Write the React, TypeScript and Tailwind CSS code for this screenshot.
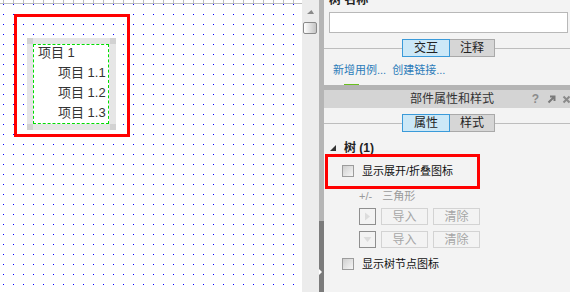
function Checkbox() {
  return (
    <div className="h-[12px] w-[12px] shrink-0 border border-[#9c9c9c] bg-[linear-gradient(135deg,#cfcfcf,#f6f6f6)]" />
  );
}

function Tabs({ a, b }: { a: string; b: string }) {
  return (
    <div className="flex h-[18px] shrink-0 items-center">
      <div className="h-px w-[78px] bg-[#bdbdbd]" />
      <div className="flex h-[18px] w-[48px] items-center justify-center border border-[#3a9ad9] bg-[#cce8f7] text-[12px] leading-none text-[#222]">
        {a}
      </div>
      <div className="flex h-[18px] w-[45px] items-center justify-center border border-l-0 border-[#a9a9a9] bg-[#d6d6d6] text-[12px] leading-none text-[#222]">
        {b}
      </div>
      <div className="h-px flex-1 bg-[#bdbdbd]" />
    </div>
  );
}

function ImgRow({ down }: { down?: boolean }) {
  return (
    <div className="flex h-[17px] shrink-0 items-center pl-[35px]">
      <div className="flex h-[17px] w-[17px] items-center justify-center border border-[#8f8f8f] bg-[#f3f3f3]">
        <svg width="9" height="9" viewBox="0 0 9 9">
          {down ? <path d="M0.5 2 L8.5 2 L4.5 7 Z" fill="#dcdcdc" /> : <path d="M2 0.5 L7 4.5 L2 8.5 Z" fill="#dcdcdc" />}
        </svg>
      </div>
      <div className="ml-[5px] flex h-[17px] w-[47px] items-center justify-center border border-[#d3d3d3] text-[12px] leading-none text-[#a6a6a6]">
        导入
      </div>
      <div className="ml-[5px] flex h-[17px] w-[47px] items-center justify-center border border-[#d3d3d3] text-[12px] leading-none text-[#a6a6a6]">
        清除
      </div>
    </div>
  );
}

function Canvas() {
  return (
    <div className="relative h-full w-[302px] shrink-0 bg-white">
      <svg className="absolute left-0 top-0" width="302" height="292">
        <defs>
          <pattern id="dots" x="0" y="0" width="10" height="10" patternUnits="userSpaceOnUse">
            <rect x="3" y="4" width="1" height="1" fill="#0000ff" />
          </pattern>
          <pattern id="ticks" x="0" y="0" width="10" height="3" patternUnits="userSpaceOnUse">
            <rect x="3" y="0" width="1" height="3" fill="#bdbdbd" />
          </pattern>
        </defs>
        <rect x="0" y="0" width="302" height="292" fill="url(#dots)" />
        <rect x="0" y="0" width="302" height="3" fill="url(#ticks)" />
        <rect x="0" y="3" width="302" height="1" fill="#bdbdbd" />
      </svg>
      <div className="absolute left-[14px] top-[14px] h-[123px] w-[116px] border-[3px] border-[#ff0000]" />
      <div className="absolute left-[27px] top-[38px] h-[92px] w-[89px] bg-[#e6e6e6] pl-[6px] pt-[6px]">
        <div className="absolute left-0 top-0 h-[6px] w-[6px] bg-[#d2d2d2]" />
        <div className="absolute right-0 top-0 h-[6px] w-[6px] bg-[#d2d2d2]" />
        <div className="absolute bottom-0 left-0 h-[6px] w-[6px] bg-[#d2d2d2]" />
        <div className="absolute bottom-0 right-0 h-[6px] w-[6px] bg-[#d2d2d2]" />
        <div className="h-[80px] w-[76px] overflow-hidden border border-dashed border-[#00dd00] bg-white pl-[4px] text-[13px] leading-[20px] text-[#333]">
          <div className="-mt-[2px]">项目 1</div>
          <div className="pl-[20px]">项目 1.1</div>
          <div className="pl-[20px]">项目 1.2</div>
          <div className="pl-[20px]">项目 1.3</div>
        </div>
      </div>
    </div>
  );
}

function Scrollbar() {
  return (
    <div className="flex h-full w-[17px] shrink-0 flex-col bg-[#ececec]">
      <div className="flex h-[21px] items-start justify-center pt-[10px] pr-[1px]">
        <svg width="7" height="4" viewBox="0 0 7 4">
          <path d="M0 4 L7 4 L4.5 0 Z" fill="#8a8a8a" />
        </svg>
      </div>
      <div className="ml-[1px] mt-[1px] h-[12px] w-[14px] rounded-[2px] border border-[#8a8a8a] bg-[linear-gradient(to_right,#ffffff,#c4c4c4)]" />
    </div>
  );
}

function Splitter() {
  return (
    <div className="flex h-full w-[5px] shrink-0 flex-col">
      <div className="flex-1 bg-[#b5b5b5]" />
      <div className="h-[71px] bg-[#7b7b7b] pt-[48px]">
        <svg width="4" height="6" viewBox="0 0 4 6">
          <path d="M0 0 L3 3 L0 6 Z" fill="#ffffff" />
        </svg>
      </div>
    </div>
  );
}

function Panel() {
  return (
    <div className="flex h-full min-w-0 flex-1 flex-col bg-[#f3f3f3]">
      <div className="flex h-[84px] shrink-0 flex-col">
        <div className="-mt-[6px] h-[12px] pl-[5px] text-[12px] font-bold leading-[12px] text-[#222]">树 名称</div>
        <div className="ml-[5px] mr-[2px] mt-[6px] h-[21px] shrink-0 border border-[#b8b8b8] bg-white" />
        <div className="mt-[6px]">
          <Tabs a="交互" b="注释" />
        </div>
        <div className="mt-[7px] flex pl-[9px] text-[11px] leading-[12px] text-[#2b7bb9]">
          <span>新增用例...</span>
          <span className="ml-[6px]">创建链接...</span>
        </div>
      </div>
      <div className="flex h-[1px] shrink-0">
        <div className="ml-[20px] w-[15px] bg-[#6abf1e]" />
      </div>
      <div className="h-[5px] shrink-0 bg-[#b4b4b4]" />
      <div className="flex h-[18px] shrink-0 items-center bg-[#d4d4d4] text-[12px] leading-none">
        <span className="ml-[86px] text-[#333]">部件属性和样式</span>
        <span className="ml-auto mr-[0px] flex items-center">
          <span className="text-[12px] font-bold text-[#8c8c8c]">?</span>
          <svg className="ml-[8px]" width="9" height="9" viewBox="0 0 9 9">
            <path d="M1.5 7.5 L7 2 M3 1.5 L7.5 1.5 L7.5 6" stroke="#7a7a7a" strokeWidth="2" fill="none" />
          </svg>
          <svg className="ml-[6px] -mr-[1px]" width="9" height="9" viewBox="0 0 9 9">
            <path d="M1.5 1.5 L7.5 7.5 M7.5 1.5 L1.5 7.5" stroke="#8a8a8a" strokeWidth="2" fill="none" />
          </svg>
        </span>
      </div>
      <div className="flex flex-1 flex-col pt-[6px]">
        <Tabs a="属性" b="样式" />
        <div className="mt-[10px] flex h-[12px] shrink-0 items-center pl-[6px]">
          <svg width="6" height="6" viewBox="0 0 6 6">
            <path d="M6 0 L6 6 L0 6 Z" fill="#333" />
          </svg>
          <span className="ml-[8px] text-[12px] font-bold leading-[12px] text-[#222]">树 (1)</span>
        </div>
        <div className="ml-[1px] h-[35px] w-[155px] shrink-0 border-[3px] border-[#ff0000] pl-[14px] pt-[7px]">
          <div className="flex h-[13px] items-center">
            <Checkbox />
            <span className="ml-[8px] text-[11px] leading-[12px] text-[#111]">显示展开/折叠图标</span>
          </div>
        </div>
        <div className="mt-[1px] flex h-[12px] shrink-0 items-center pl-[35px] text-[11px] leading-[12px] text-[#9a9a9a]">
          <span>+/-</span>
          <span className="ml-[10px]">三角形</span>
        </div>
        <div className="mt-[6px]">
          <ImgRow />
        </div>
        <div className="mt-[6px]">
          <ImgRow down />
        </div>
        <div className="mt-[9px] flex h-[13px] shrink-0 items-center pl-[18px]">
          <Checkbox />
          <span className="ml-[8px] text-[11px] leading-[12px] text-[#111]">显示树节点图标</span>
        </div>
      </div>
    </div>
  );
}

export default function App() {
  return (
    <div className="flex h-[292px] w-[570px] overflow-hidden bg-white font-['Liberation_Sans','Noto_Sans_CJK_SC',sans-serif]">
      <Canvas />
      <Scrollbar />
      <Splitter />
      <Panel />
    </div>
  );
}
